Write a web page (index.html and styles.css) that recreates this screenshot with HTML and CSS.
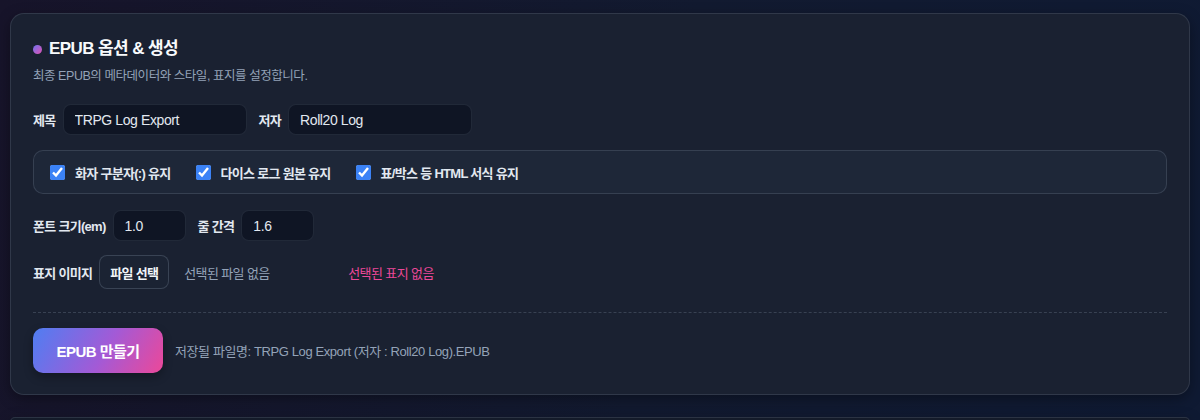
FILE: index.html
```html
<!DOCTYPE html>
<html lang="ko">
<head>
  <meta charset="UTF-8">
  <meta name="viewport" content="width=device-width, initial-scale=1.0">
  <title>EPUB 옵션 & 생성</title>
  <link rel="stylesheet" href="styles.css">
</head>
<body>
  <section class="panel">
    <h2 class="panel-title"><span class="dot"></span>EPUB 옵션 &amp; 생성</h2>
    <p class="panel-desc">최종 EPUB의 메타데이터와 스타일, 표지를 설정합니다.</p>

    <div class="row">
      <label class="field">
        <span class="field-label">제목</span>
        <input class="text-input wide" type="text" value="TRPG Log Export">
      </label>
      <label class="field">
        <span class="field-label">저자</span>
        <input class="text-input wide" type="text" value="Roll20 Log">
      </label>
    </div>

    <div class="check-box">
      <label class="check"><input type="checkbox" checked>화자 구분자(:) 유지</label>
      <label class="check"><input type="checkbox" checked>다이스 로그 원본 유지</label>
      <label class="check"><input type="checkbox" checked>표/박스 등 HTML 서식 유지</label>
    </div>

    <div class="row check-next">
      <label class="field">
        <span class="field-label">폰트 크기(em)</span>
        <input class="text-input narrow" type="text" value="1.0">
      </label>
      <label class="field">
        <span class="field-label">줄 간격</span>
        <input class="text-input narrow" type="text" value="1.6">
      </label>
    </div>

    <div class="row cover-row">
      <span class="field-label">표지 이미지</span>
      <div class="file-pick">
        <span class="file-btn">파일 선택</span>
        <span class="file-name">선택된 파일 없음</span>
      </div>
      <span class="cover-status">선택된 표지 없음</span>
    </div>

    <div class="build-row">
      <button class="build-btn" type="button">EPUB 만들기</button>
      <span class="out-name">저장될 파일명: TRPG Log Export (저자 : Roll20 Log).EPUB</span>
    </div>
  </section>

  <section class="panel next"></section>
</body>
</html>
```

FILE: styles.css
```css
* {
  box-sizing: border-box;
}
body {
  margin: 0;
  padding: 13px 10px 0;
  height: 420px;
  overflow: hidden;
  font-family: "Liberation Sans", "Noto Sans CJK KR", sans-serif;
  letter-spacing: -0.4px;
  color: #e2e8f0;
  background: linear-gradient(100deg, #17142a 0%, #121a30 55%, #0f1a33 100%);
}
.panel {
  background: #1a2131;
  border: 1px solid rgba(148, 163, 184, 0.18);
  border-radius: 14px;
  padding: 23px 22px 21px;
  box-shadow: 0 4px 14px rgba(0, 0, 0, 0.35);
}
.panel.next {
  margin-top: 22px;
  height: 10px;
  padding: 0;
  background: #141b2a;
}
.panel-title {
  display: flex;
  align-items: center;
  gap: 7px;
  margin: 0;
  font-size: 17px;
  line-height: 24px;
  font-weight: bold;
  letter-spacing: -0.6px;
  color: #f8fafc;
}
.dot {
  width: 9px;
  height: 9px;
  border-radius: 50%;
  background: linear-gradient(135deg, #6f72f0, #e052b0);
}
.panel-desc {
  margin: 5px 0 0;
  font-size: 12.5px;
  line-height: 20px;
  letter-spacing: -0.45px;
  color: #94a3b8;
}
.row {
  display: flex;
  align-items: center;
  gap: 12px;
  margin-top: 18px;
}
.field {
  display: flex;
  align-items: center;
  gap: 7px;
}
.field-label {
  font-size: 13px;
  font-weight: bold;
  letter-spacing: -0.7px;
  color: #e2e8f0;
}
.text-input {
  height: 31px;
  padding: 0 11px;
  border: 1px solid rgba(148, 163, 184, 0.14);
  border-radius: 8px;
  background: #0f1524;
  color: #e2e8f0;
  font: 14px "Liberation Sans", "Noto Sans CJK KR", sans-serif;
  letter-spacing: -0.4px;
  outline: none;
}
.text-input.wide {
  width: 184px;
}
.text-input.narrow {
  width: 73px;
}
.check-box {
  display: flex;
  align-items: center;
  gap: 25px;
  height: 44px;
  margin-top: 15px;
  padding: 0 16px;
  background: #1e2738;
  border: 1px solid rgba(148, 163, 184, 0.2);
  border-radius: 10px;
}
.check {
  display: flex;
  align-items: center;
  gap: 10px;
  font-size: 13px;
  font-weight: bold;
  letter-spacing: -0.7px;
  color: #e2e8f0;
}
.check input {
  width: 15px;
  height: 15px;
  margin: 0;
  accent-color: #3b82f6;
}
.row.check-next {
  margin-top: 16px;
}
.row.cover-row {
  gap: 7px;
  margin-top: 14px;
}
.file-pick {
  display: flex;
  align-items: center;
  gap: 15px;
  width: 242px;
}
.file-btn {
  display: inline-flex;
  align-items: center;
  height: 34px;
  padding: 0 10px;
  border: 1px solid rgba(148, 163, 184, 0.25);
  border-radius: 8px;
  background: #1b2333;
  font-size: 13px;
  font-weight: bold;
  letter-spacing: -0.7px;
  color: #f1f5f9;
}
.file-name {
  font-size: 13px;
  letter-spacing: -0.6px;
  color: #94a3b8;
}
.cover-status {
  font-size: 13px;
  letter-spacing: -0.6px;
  color: #ec4899;
}
.build-row {
  display: flex;
  align-items: center;
  gap: 12px;
  margin-top: 23px;
  padding-top: 15px;
  border-top: 1px dashed rgba(148, 163, 184, 0.25);
}
.build-btn {
  width: 130px;
  height: 45px;
  border: 0;
  border-radius: 10px;
  background: linear-gradient(120deg, #4f7ef2 0%, #a35ad6 55%, #ec4899 100%);
  color: #ffffff;
  font: bold 15px "Liberation Sans", "Noto Sans CJK KR", sans-serif;
  letter-spacing: -0.5px;
  box-shadow: 0 4px 10px rgba(0, 0, 0, 0.3);
}
.out-name {
  font-size: 13px;
  color: #94a3b8;
}
```
